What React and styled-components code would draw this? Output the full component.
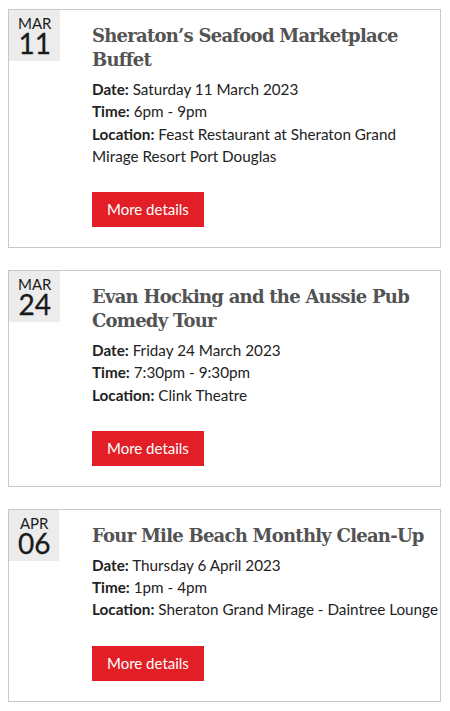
import React from "react";
import styled, { createGlobalStyle } from "styled-components";

const GlobalStyle = createGlobalStyle`
  body {
    margin: 8px;
    background: #fff;
    font-family: Lato, "Liberation Sans", sans-serif;
    color: #222;
  }
`;

const events = [
  {
    month: "MAR",
    day: "11",
    title: "Sheraton’s Seafood Marketplace Buffet",
    date: "Saturday 11 March 2023",
    time: "6pm - 9pm",
    location: "Feast Restaurant at Sheraton Grand Mirage Resort Port Douglas",
  },
  {
    month: "MAR",
    day: "24",
    title: "Evan Hocking and the Aussie Pub Comedy Tour",
    date: "Friday 24 March 2023",
    time: "7:30pm - 9:30pm",
    location: "Clink Theatre",
  },
  {
    month: "APR",
    day: "06",
    title: "Four Mile Beach Monthly Clean-Up",
    date: "Thursday 6 April 2023",
    time: "1pm - 4pm",
    location: "Sheraton Grand Mirage - Daintree Lounge",
  },
];

const EventCard = ({ event }) => (
  <Card>
    <DateCol>
      <DateBox>
        <Month>{event.month}</Month>
        <Day>{event.day}</Day>
      </DateBox>
    </DateCol>
    <Body>
      <Title>{event.title}</Title>
      <Detail>
        <b>Date:</b> {event.date}
      </Detail>
      <Detail>
        <b>Time:</b> {event.time}
      </Detail>
      <Detail>
        <b>Location:</b> {event.location}
      </Detail>
      <Button href="#">More details</Button>
    </Body>
  </Card>
);

const App = () => (
  <>
    <GlobalStyle />
    <List>
      {events.map((e) => (
        <EventCard key={e.day + e.month} event={e} />
      ))}
    </List>
  </>
);

const List = styled.div`
  display: flex;
  flex-direction: column;
  gap: 22px;
  width: 433px;
  padding-top: 1px;
`;

const Card = styled.div`
  display: flex;
  border: 1px solid #c8c8c8;
  padding-bottom: 20px;
`;

const DateCol = styled.div`
  width: 83px;
  flex-shrink: 0;
`;

const DateBox = styled.div`
  display: inline-flex;
  flex-direction: column;
  align-items: center;
  background: #ececec;
  padding: 6px 9px 5px;
  color: #1a1a1a;
`;

const Month = styled.span`
  font-size: 15px;
  line-height: 15px;
`;

const Day = styled.span`
  font-size: 28px;
  line-height: 25px;
  -webkit-text-stroke: 0.3px #1a1a1a;
`;

const Body = styled.div`
  flex: 1;
  padding-top: 14px;
`;

const Title = styled.h2`
  margin: 0 0 6px;
  font-family: "DejaVu Serif", serif;
  font-weight: bold;
  font-size: 18px;
  letter-spacing: -0.75px;
  line-height: 24px;
  color: #535353;
`;

const Detail = styled.div`
  font-size: 15.25px;
  line-height: 22.25px;
  color: #222;

  b {
    font-weight: bold;
  }
`;

const Button = styled.a`
  display: inline-block;
  margin-top: 25px;
  background: #e21f26;
  color: #fff;
  text-decoration: none;
  font-size: 15px;
  line-height: 35px;
  padding: 0 15px;
`;

export default App;
